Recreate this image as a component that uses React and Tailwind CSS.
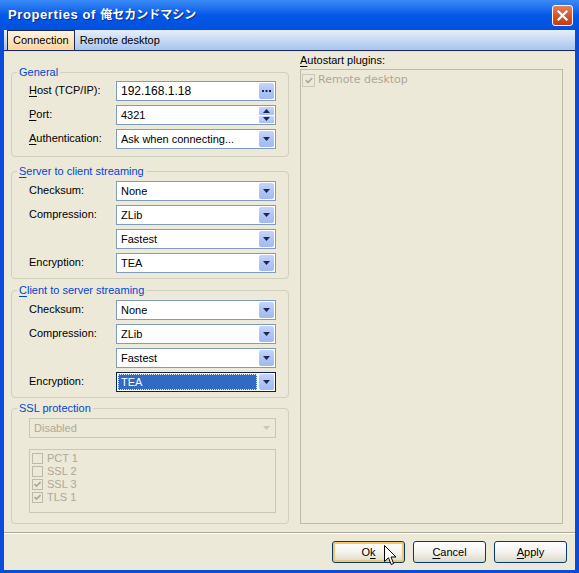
import clsx from "clsx"

// XP-ish properties dialog

function Arrow({ disabled }) {
  return (
    <svg width="7" height="4" viewBox="0 0 7 4">
      <polygon points="0,0 7,0 3.5,4" fill={disabled ? "#C9C7BA" : "#1B2A4A"} />
    </svg>
  )
}

function DropBtn({ disabled, children }) {
  return (
    <div
      className={clsx(
        "flex h-[16px] w-[15px] shrink-0 items-center justify-center rounded-[2px]",
        disabled ? "" : "bg-gradient-to-b from-[#C6D5FB] via-[#AFC4F6] to-[#A2B9F3]"
      )}
    >
      {children || <Arrow disabled={disabled} />}
    </div>
  )
}

function Combo({ value, selected, disabled, width = "w-[160px]" }) {
  return (
    <div
      className={clsx(
        "flex h-[20px] items-center border p-[1px]",
        width,
        selected ? "border-[#0A1E5A]" : disabled ? "border-[#C9C7BA]" : "border-[#7F9DB9]",
        disabled ? "bg-[#ECE9D8]" : "bg-white"
      )}
    >
      {selected ? (
        <div className="mr-[2px] flex h-full flex-1 items-center border border-dotted border-[#E8E8E8] bg-[#316AC5] pl-[2px] text-white">
          {value}
        </div>
      ) : (
        <div className={clsx("flex-1 pl-[3px]", disabled ? "text-[#ACA899]" : "text-black")}>{value}</div>
      )}
      <DropBtn disabled={disabled} />
    </div>
  )
}

function Label({ children }) {
  return <div className="w-[87px] shrink-0 pt-[3px] leading-[13px]">{children}</div>
}

function Row({ label, children }) {
  return (
    <div className="flex h-[20px] items-start">
      <Label>{label}</Label>
      {children}
    </div>
  )
}

function U({ children }) {
  return <span className="underline underline-offset-[2px]">{children}</span>
}

function Group({ title, className, children }) {
  return (
    <fieldset className={clsx("rounded-[4px] border border-[#D0D0BF] pl-[17px] pr-[12px]", className)}>
      <legend className="-ml-[12px] px-[2px] leading-[14px] text-[#0046D5]">{title}</legend>
      {children}
    </fieldset>
  )
}

function Check({ checked, label, className }) {
  return (
    <div className={clsx("flex h-[13px] items-center gap-[4px] text-[#ACA899]", className)}>
      <div className="flex h-[11px] w-[11px] items-center justify-center border border-[#BDBAA8]">
        {checked && (
          <svg width="7" height="7" viewBox="0 0 7 7">
            <path d="M0.5 3 L2.5 5 L6.5 1" stroke="#ACA899" strokeWidth="1.6" fill="none" />
          </svg>
        )}
      </div>
      <span>{label}</span>
    </div>
  )
}

function Btn({ children, isDefault }) {
  return (
    <div
      className={clsx(
        "flex h-[22px] w-[73px] items-center justify-center rounded-[3px] border border-[#003C74] bg-gradient-to-b from-white via-[#F4F3EE] to-[#DCD8C8] text-black",
        isDefault && "shadow-[inset_0_0_0_2px_#F7C46A]"
      )}
    >
      {children}
    </div>
  )
}

export default function App() {
  return (
    <div className="flex h-[573px] w-[579px] flex-col bg-[#0A4CD8] font-['Liberation_Sans',Arial,'Noto_Sans_CJK_JP',sans-serif] text-[11px] text-black">
      {/* title bar */}
      <div className="flex h-[30px] shrink-0 items-center justify-between bg-gradient-to-b from-[#3A8BF6] via-[#0458E6] to-[#0050DD] pl-[8px] pr-[6px]">
        <div className="text-[13px] font-bold tracking-[0.6px] text-white [text-shadow:1px_1px_0_#0A2C8C]">
          Properties of <span className="text-[12px] tracking-[0px]">俺セカンドマシン</span>
        </div>
        <div className="flex h-[21px] w-[21px] items-center justify-center rounded-[3px] border border-white bg-gradient-to-b from-[#E8805A] via-[#D8552E] to-[#C23C17]">
          <svg width="11" height="11" viewBox="0 0 11 11">
            <path d="M1.5 1.5 L9.5 9.5 M9.5 1.5 L1.5 9.5" stroke="white" strokeWidth="2.2" strokeLinecap="square" />
          </svg>
        </div>
      </div>

      {/* body */}
      <div className="mx-[4px] flex flex-1 flex-col bg-[#ECE9D8]">
        {/* tabs */}
        <div className="flex h-[21px] shrink-0 items-end border-b border-[#1D2A55] bg-gradient-to-b from-[#E6EEFB] to-[#A9C4EE] pl-[3px]">
          <div className="flex h-[20px] items-center border-x border-t border-[#1D2A55] bg-gradient-to-b from-[#FFF4E0] to-[#FFD49C] px-[5px]">
            Connection
          </div>
          <div className="flex h-[20px] items-center px-[5px]">Remote desktop</div>
        </div>
        <div className="h-[1px] shrink-0 bg-[#F3D7C8]" />

        {/* content */}
        <div className="flex flex-1 gap-[12px] pl-[7px] pr-[12px]">
          {/* left column */}
          <div className="flex w-[277px] flex-col pt-[13px]">
            <Group title="General" className="pb-[7px] pt-[2px]">
              <div className="flex flex-col gap-[4px]">
                <Row label={<><U>H</U>ost (TCP/IP):</>}>
                  <div className="flex h-[20px] w-[160px] items-center border border-[#7F9DB9] bg-white p-[1px]">
                    <div className="flex-1 pl-[3px] text-[12px]">192.168.1.18</div>
                    <DropBtn>
                      <svg width="9" height="2" viewBox="0 0 9 2">
                        <rect x="0" y="0" width="2" height="2" fill="#1B2A4A" />
                        <rect x="3.5" y="0" width="2" height="2" fill="#1B2A4A" />
                        <rect x="7" y="0" width="2" height="2" fill="#1B2A4A" />
                      </svg>
                    </DropBtn>
                  </div>
                </Row>
                <Row label={<><U>P</U>ort:</>}>
                  <div className="flex h-[20px] w-[160px] items-center border border-[#7F9DB9] bg-white p-[1px]">
                    <div className="flex-1 pl-[3px]">4321</div>
                    <div className="flex h-full w-[15px] flex-col gap-[1px]">
                      <div className="flex flex-1 items-center justify-center rounded-[1px] bg-gradient-to-b from-[#C6D5FB] to-[#A7BEF5]">
                        <svg width="7" height="4" viewBox="0 0 7 4">
                          <polygon points="0,4 7,4 3.5,0" fill="#1B2A4A" />
                        </svg>
                      </div>
                      <div className="flex flex-1 items-center justify-center rounded-[1px] bg-gradient-to-b from-[#C6D5FB] to-[#A7BEF5]">
                        <Arrow />
                      </div>
                    </div>
                  </div>
                </Row>
                <Row label={<><U>A</U>uthentication:</>}>
                  <Combo value="Ask when connecting..." />
                </Row>
              </div>
            </Group>

            <Group title={<><U>S</U>erver to client streaming</>} className="mt-[7px] pb-[5px] pt-[3px]">
              <div className="flex flex-col gap-[4px]">
                <Row label="Checksum:">
                  <Combo value="None" />
                </Row>
                <Row label="Compression:">
                  <Combo value="ZLib" />
                </Row>
                <Row label="">
                  <Combo value="Fastest" />
                </Row>
                <Row label="Encryption:">
                  <Combo value="TEA" />
                </Row>
              </div>
            </Group>

            <Group title={<><U>C</U>lient to server streaming</>} className="mt-[4px] pb-[5px] pt-[3px]">
              <div className="flex flex-col gap-[4px]">
                <Row label="Checksum:">
                  <Combo value="None" />
                </Row>
                <Row label="Compression:">
                  <Combo value="ZLib" />
                </Row>
                <Row label="">
                  <Combo value="Fastest" />
                </Row>
                <Row label="Encryption:">
                  <Combo value="TEA" selected />
                </Row>
              </div>
            </Group>

            <Group title="SSL protection" className="mt-[3px] pb-[10px] pt-[3px]">
              <Combo value="Disabled" disabled width="w-[247px]" />
              <div className="mt-[11px] h-[64px] w-[247px] border border-[#C9C7BA] pl-[2px] pt-[2px]">
                <Check label="PCT 1" />
                <Check label="SSL 2" />
                <Check label="SSL 3" checked />
                <Check label="TLS 1" checked />
              </div>
            </Group>
          </div>

          {/* right column */}
          <div className="flex flex-1 flex-col pt-[2px]">
            <div className="leading-[13px]">
              <U>A</U>utostart plugins:
            </div>
            <div className="mt-[2px] h-[455px] border border-[#BDBAA8] pl-[1px] pt-[2px]">
              <div className="flex items-center gap-[3px] font-['DejaVu_Sans',sans-serif] text-[11px] text-[#ACA899]">
                <div className="flex h-[13px] w-[13px] items-center justify-center border border-[#C9C7BA]">
                  <svg width="8" height="7" viewBox="0 0 8 7">
                    <path d="M0.8 3.2 L3 5.5 L7.2 1" stroke="#ACA899" strokeWidth="1.7" fill="none" />
                  </svg>
                </div>
                Remote desktop
              </div>
            </div>
          </div>
        </div>

        {/* footer */}
        <div className="shrink-0 border-t border-[#ACA899]">
          <div className="h-[1px] bg-white" />
          <div className="flex justify-end gap-[8px] pb-[7px] pr-[8px] pt-[7px]">
            <div className="relative">
              <Btn isDefault>
                O<U>k</U>
              </Btn>
              <svg className="absolute left-[52px] top-[4px]" width="13" height="21" viewBox="0 0 13 21">
                <path
                  d="M0.5 0.5 L0.5 16.5 L4.5 12.8 L7.2 19.5 L9.6 18.5 L7 12 L12 12 Z"
                  fill="white"
                  stroke="black"
                  strokeWidth="1"
                  strokeLinejoin="miter"
                />
              </svg>
            </div>
            <Btn>
              <U>C</U>ancel
            </Btn>
            <Btn>
              <U>A</U>pply
            </Btn>
          </div>
        </div>
      </div>
      <div className="h-[3px] shrink-0" />
    </div>
  )
}
